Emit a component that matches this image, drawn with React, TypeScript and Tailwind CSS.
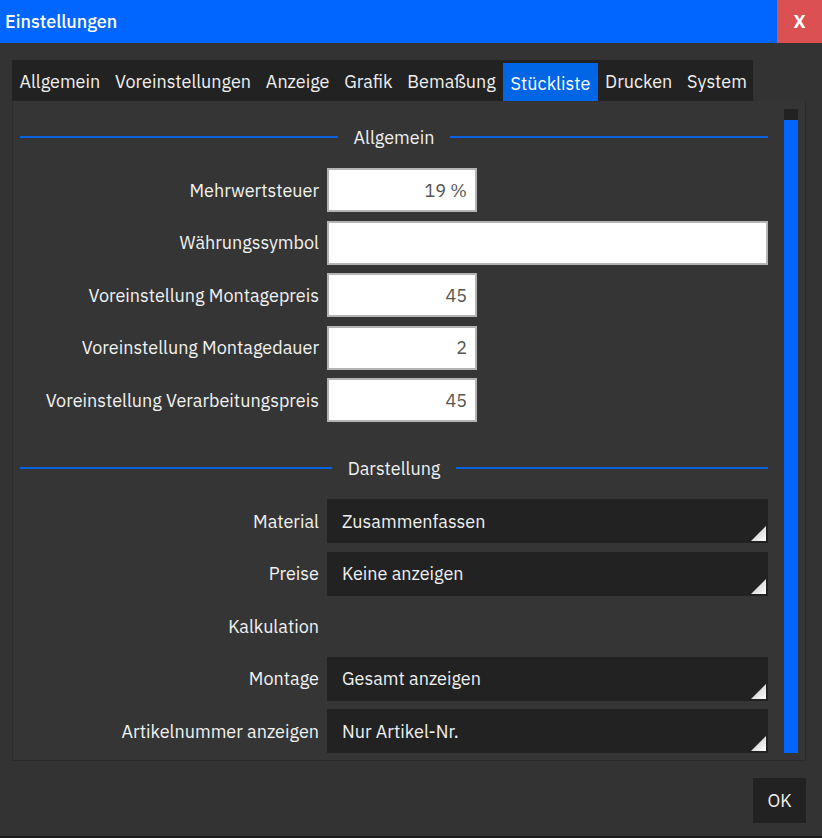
import { ReactNode } from 'react';

const tabs = ['Allgemein', 'Voreinstellungen', 'Anzeige', 'Grafik', 'Bemaßung', 'Stückliste', 'Drucken', 'System'];

function SectionHeader({ title }: { title: string }) {
  return (
    <div className="flex items-center h-6 gap-4">
      <div className="flex-1 h-[2px] bg-[#0b62e0]" />
      <span className="text-[#f0f0f0]">{title}</span>
      <div className="flex-1 h-[2px] bg-[#0b62e0]" />
    </div>
  );
}

function Row({ label, children }: { label: string; children?: ReactNode }) {
  return (
    <div className="flex items-center h-11 gap-2">
      <div className="w-[299px] shrink-0 text-right text-[#f2f2f2] whitespace-nowrap">{label}</div>
      <div className="flex-1 flex">{children}</div>
    </div>
  );
}

function NumberField({ value, wide }: { value: string; wide?: boolean }) {
  return (
    <div
      className={`${wide ? 'w-full' : 'w-[150px]'} h-11 bg-white border-2 border-[#b4b4b4] flex items-center justify-end pr-2 text-[#555]`}
    >
      {value}
    </div>
  );
}

function Select({ value }: { value: string }) {
  return (
    <div className="relative w-full h-11 bg-[#222] flex items-center pl-[15px] text-[#f0f0f0]">
      {value}
      <svg className="absolute right-[2px] bottom-[2px]" width="15" height="15" viewBox="0 0 15 15">
        <defs>
          <linearGradient id="tri" x1="0" y1="0" x2="1" y2="1">
            <stop offset="0" stopColor="#bdbdbd" />
            <stop offset="1" stopColor="#ffffff" />
          </linearGradient>
        </defs>
        <polygon points="15,0 15,15 0,15" fill="url(#tri)" />
      </svg>
    </div>
  );
}

export default function App() {
  return (
    <div
      className="w-[822px] h-[838px] bg-[#333] flex flex-col text-[18px] border-b-2 border-[#1c1c1c] overflow-hidden"
      style={{ fontFamily: '"IBM Plex Sans", "Noto Sans", sans-serif' }}
    >
      {/* Title bar */}
      <div className="h-[43px] bg-[#0066ff] flex items-center justify-between shrink-0">
        <span className="pl-[5px] text-white font-medium">Einstellungen</span>
        <div className="w-[45px] h-full bg-[#db5050] flex items-center justify-center text-white font-bold text-[18px]">
          X
        </div>
      </div>

      {/* Body */}
      <div className="flex flex-col px-3 pt-[17px]">
        {/* Tabs */}
        <div className="w-[741px] h-[41px] bg-[#222] flex items-end pt-[3px]">
          {tabs.map((t) => (
            <div
              key={t}
              className={`h-[38px] px-[7.4px] flex items-center text-[#f0f0f0] ${
                t === 'Stückliste' ? 'bg-[#0066e6] text-white pt-[2px]' : 'pb-[2px]'
              }`}
            >
              {t}
            </div>
          ))}
        </div>

        {/* Panel */}
        <div className="w-[794px] h-[660px] bg-[#353535] border border-t-0 border-[#2b2b2b] flex overflow-hidden">
          <div className="w-[748px] ml-[7px] pt-6 flex flex-col">
            <SectionHeader title="Allgemein" />
            <div className="flex flex-col gap-[8.5px] mt-[19px]">
              <Row label="Mehrwertsteuer">
                <NumberField value="19 %" />
              </Row>
              <Row label="Währungssymbol">
                <NumberField value="" wide />
              </Row>
              <Row label="Voreinstellung Montagepreis">
                <NumberField value="45" />
              </Row>
              <Row label="Voreinstellung Montagedauer">
                <NumberField value="2" />
              </Row>
              <Row label="Voreinstellung Verarbeitungspreis">
                <NumberField value="45" />
              </Row>
            </div>

            <div className="mt-[34px]">
              <SectionHeader title="Darstellung" />
            </div>
            <div className="flex flex-col gap-[8.5px] mt-[19px]">
              <Row label="Material">
                <Select value="Zusammenfassen" />
              </Row>
              <Row label="Preise">
                <Select value="Keine anzeigen" />
              </Row>
              <Row label="Kalkulation" />
              <Row label="Montage">
                <Select value="Gesamt anzeigen" />
              </Row>
              <Row label="Artikelnummer anzeigen">
                <Select value="Nur Artikel-Nr." />
              </Row>
            </div>
          </div>

          {/* Scrollbar */}
          <div className="ml-[16px] mt-2 w-[14px] h-[644px] flex flex-col">
            <div className="h-[11px] bg-[#222]" />
            <div className="flex-1 bg-[#0066ff]" />
          </div>
        </div>

        {/* Footer */}
        <div className="flex justify-end pt-[17px] pr-[4px]">
          <div className="w-[53px] h-[45px] bg-[#222] flex items-center justify-center text-[#f0f0f0]">OK</div>
        </div>
      </div>
    </div>
  );
}
